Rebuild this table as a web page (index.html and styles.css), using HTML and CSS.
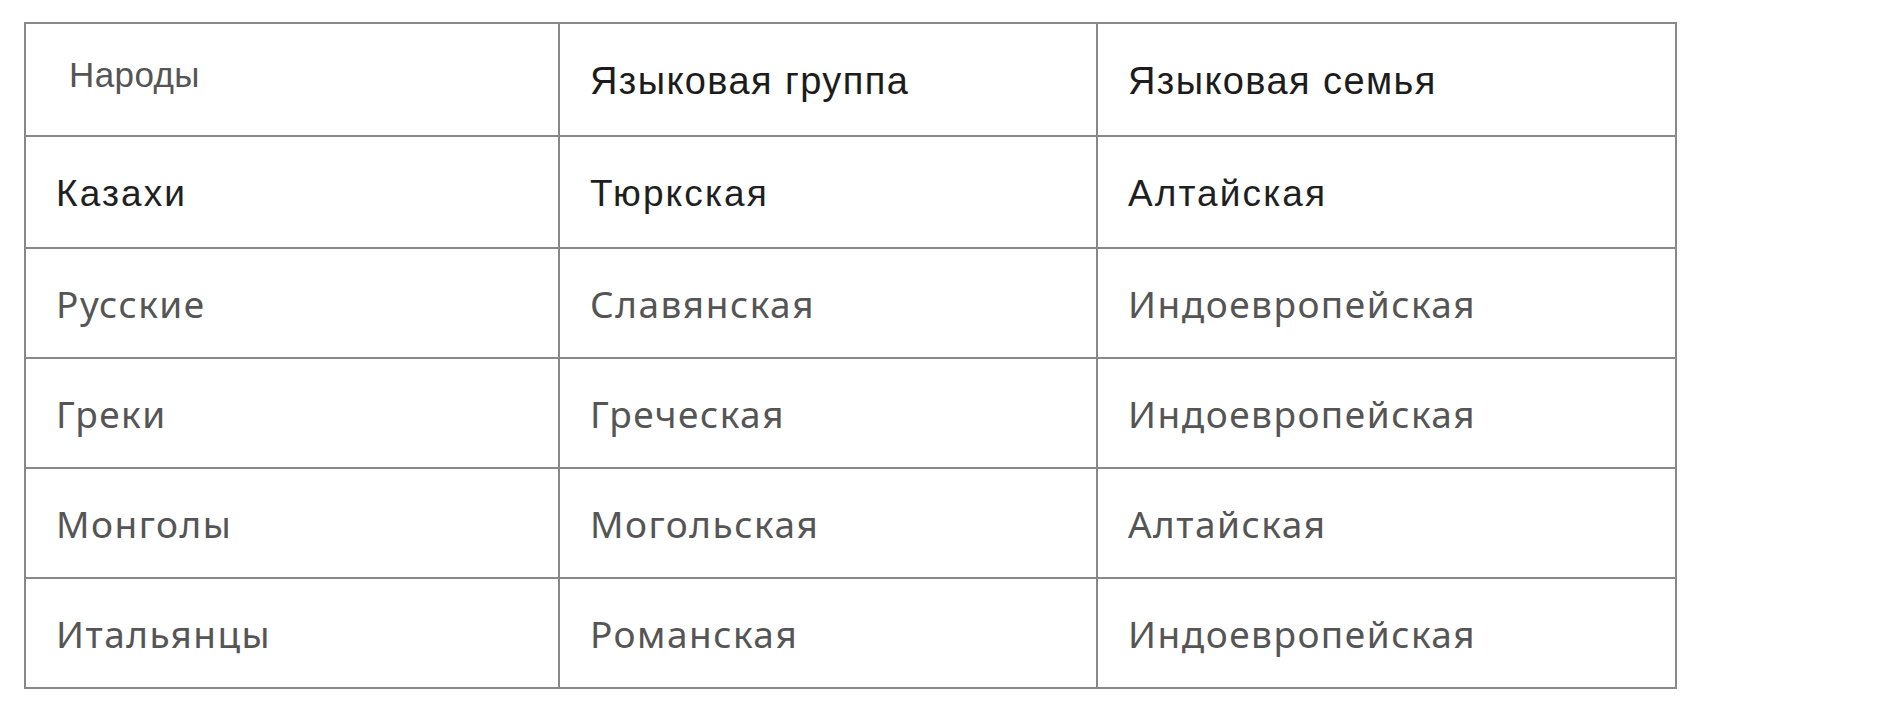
FILE: index.html
```html
<!DOCTYPE html>
<html lang="ru">
<head>
<meta charset="utf-8">
<title>Народы и языки</title>
<link rel="stylesheet" href="styles.css">
</head>
<body>
<table class="peoples">
  <colgroup>
    <col class="c1">
    <col class="c2">
    <col class="c3">
  </colgroup>
  <thead>
    <tr class="head">
      <th class="first">Народы</th>
      <th>Языковая группа</th>
      <th>Языковая семья</th>
    </tr>
  </thead>
  <tbody>
    <tr class="lead">
      <td>Казахи</td>
      <td>Тюркская</td>
      <td>Алтайская</td>
    </tr>
    <tr>
      <td>Русские</td>
      <td>Славянская</td>
      <td>Индоевропейская</td>
    </tr>
    <tr>
      <td>Греки</td>
      <td>Греческая</td>
      <td>Индоевропейская</td>
    </tr>
    <tr>
      <td>Монголы</td>
      <td>Могольская</td>
      <td>Алтайская</td>
    </tr>
    <tr>
      <td>Итальянцы</td>
      <td>Романская</td>
      <td>Индоевропейская</td>
    </tr>
  </tbody>
</table>
</body>
</html>
```

FILE: styles.css
```css
html, body {
  margin: 0;
  padding: 0;
  background: #ffffff;
}

body {
  padding: 22px 0 0 24px;
}

.peoples {
  border-collapse: collapse;
  table-layout: fixed;
  width: 1653px;
  border: 2px solid #888888;
}

.c1 { width: 534px; }
.c2 { width: 538px; }
.c3 { width: 579px; }

.peoples th,
.peoples td {
  border: 2px solid #888888;
  text-align: left;
  vertical-align: middle;
  padding: 0 0 0 30px;
  white-space: nowrap;
  font-family: "Noto Sans", "Open Sans", sans-serif;
  font-weight: 400;
  font-size: 37px;
  letter-spacing: 1.5px;
  color: #555555;
  height: 108px;
}

.peoples .head th {
  font-family: "Liberation Sans", Arial, sans-serif;
  font-size: 38px;
  letter-spacing: 1.4px;
  color: #1c1c1c;
  height: 107px;
  padding-top: 4px;
}

.peoples .head th.first {
  font-size: 35px;
  letter-spacing: 0.4px;
  color: #555555;
  height: 101px;
  padding: 0 0 10px 43px;
}

.peoples .lead td {
  font-family: "Liberation Sans", Arial, sans-serif;
  font-size: 37px;
  letter-spacing: 2.1px;
  color: #1f1f1f;
  height: 106px;
  padding-top: 4px;
}
```
